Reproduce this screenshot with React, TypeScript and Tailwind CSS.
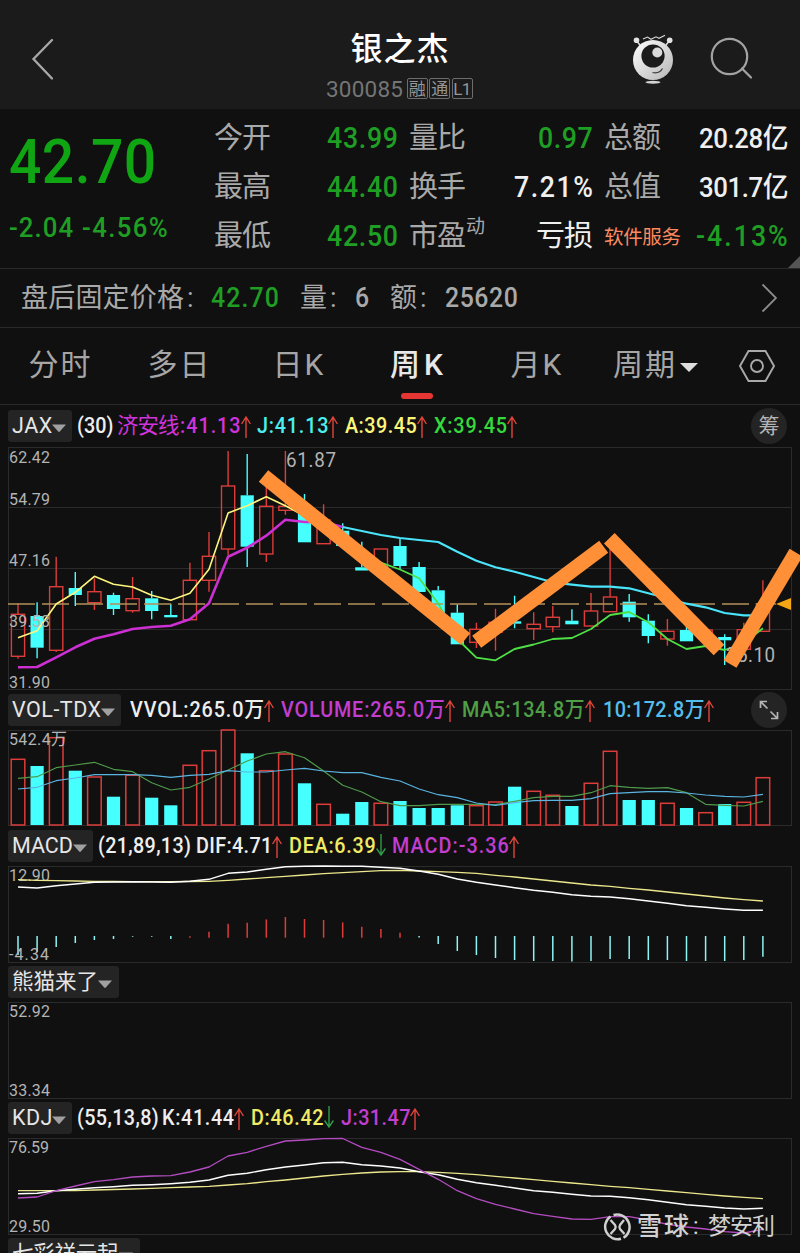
import React, { useLayoutEffect, useRef } from "react";

/* Text that spreads its letters over the width its class gives it.
   Figures are drawn a little condensed, Chinese text is not. */
function Fit({ children, className = "", wide = false }: { children: string; className?: string; wide?: boolean }) {
  const outer = useRef<HTMLSpanElement>(null);
  const inner = useRef<HTMLSpanElement>(null);
  const plain = wide || !/\d/.test(children);
  const scale = plain ? 1 : 0.92;
  useLayoutEffect(() => {
    const o = outer.current;
    const i = inner.current;
    if (!o || !i) return;
    i.style.letterSpacing = "0px";
    const gap = (o.clientWidth / scale - i.offsetWidth) / Math.max(1, children.length - 1);
    i.style.letterSpacing = `${gap}px`;
  }, [children, scale]);
  return (
    <span ref={outer} className={`block shrink-0 whitespace-nowrap ${className}`}>
      <span ref={inner} className={plain ? "inline-block" : "inline-block origin-left scale-x-[0.92]"}>
        {children}
      </span>
    </span>
  );
}

const FIRST_X = 18;
const STEP = 19.1;
const xAt = (i: number) => FIRST_X + STEP * i;
const toPoints = (ys: number[], start = 0) => ys.map((y, i) => `${xAt(i + start).toFixed(1)},${y}`).join(" ");

type Candle = [up: 0 | 1, high: number, top: number, bottom: number, low: number];

const candles: Candle[] = [
  [1, 603.3, 614.3, 656.3, 658.7], [0, 602.3, 616, 647.7, 658.3], [1, 556.7, 586.7, 650.3, 652],
  [0, 572, 588, 595, 606], [1, 578.3, 591.7, 602.7, 610], [0, 592.7, 595, 609, 615],
  [1, 577, 598.7, 610.7, 612.7], [0, 591, 598.3, 611, 619.3], [0, 603.7, 615, 617.3, 617.3],
  [1, 562.7, 580.3, 619.7, 619.7], [1, 532, 556.3, 580.3, 591.7], [1, 451, 486, 549, 555],
  [0, 454, 495.3, 546.7, 567], [1, 480, 506.3, 554, 562], [1, 451, 506.3, 510.3, 514.7],
  [0, 494, 511, 542.3, 542.3], [1, 504.3, 520, 543.7, 543.7], [0, 523.3, 530.7, 546, 546],
  [0, 541.7, 567.3, 570.5, 570.5], [1, 549, 549, 568, 568], [0, 539, 546, 566, 569.3],
  [0, 562, 567, 592, 592], [0, 586, 590.3, 613, 613], [0, 604.3, 612.7, 644.3, 644.3],
  [1, 622.7, 629.3, 642.3, 648], [1, 608.7, 622.3, 632.3, 650.7], [0, 595.7, 621.3, 623.7, 628.3],
  [1, 612.3, 624.3, 628.7, 640], [1, 606, 617.3, 626.7, 632.3], [0, 609.3, 620.7, 624.3, 624.3],
  [1, 593, 611, 626, 626], [1, 546, 597, 611.7, 611.7], [0, 594, 601.7, 617.3, 621.7],
  [0, 614.3, 620.7, 636, 643.3], [1, 619, 631.3, 639, 645.7], [0, 623.7, 630, 641.3, 641.3],
  [1, 630, 630, 639, 639], [0, 634.3, 637, 640.3, 665], [1, 622.7, 629.7, 649.3, 649.3],
  [1, 580.3, 603.7, 631.3, 631.3],
];

const priceYellow = [637.7, 630.7, 604, 592.3, 576.3, 584.3, 587, 595.3, 600.3, 593.3, 569.3, 513, 505.7, 496.7, 505.7, 516, 530];
const priceGreen = [530, 545, 553, 562.7, 569.5, 578.3, 603.3, 639, 657.7, 660.3, 649, 644.5, 639, 638, 629, 615, 612, 622.3, 639, 649, 646, 650, 643.3, 628.3];
const pricePurple = [667.3, 667, 657.3, 647.3, 638.7, 634.3, 629, 627, 625.7, 619.3, 603.3, 556.7, 547.7, 535.7, 519.7, 522, 522, 527];
const priceCyan = [527, 531, 535, 538, 540, 542, 551.7, 560.7, 567.3, 571.7, 577, 582.3, 584.7, 586.7, 586.7, 588.3, 593.3, 598.3, 603.7, 607.3, 613, 615.3, 615.3];

const volumeTops = [759.3, 766, 737.7, 770.7, 777, 796.7, 775.3, 797.7, 805.3, 765.3, 750.7, 730, 753.3, 770.7, 754, 783.3, 804.3, 813.7, 802, 803.3, 801, 808, 808, 805.3, 805.7, 802, 786.7, 791.3, 795.3, 806, 783.3, 751.3, 800, 800, 803.3, 808, 812.7, 804, 802.3, 777.7];
const volumeGreen = [778.3, 776.7, 767.7, 765, 762.3, 769.3, 771.7, 782.7, 790, 787.3, 779, 770, 761, 754, 751.7, 757.7, 771, 785.3, 792, 801.7, 805.7, 805.7, 804.3, 804.3, 804.3, 804.7, 801.3, 797.7, 796.3, 796.3, 792.7, 785.7, 787.3, 788.3, 787.7, 792.7, 804.3, 805.3, 806, 801.3];
const volumeBlue = [789, 787.3, 780.7, 778, 774.7, 774.7, 774.7, 775.3, 777.3, 775.3, 774.3, 770.7, 772, 772, 770, 768.3, 771, 772.7, 772.7, 777.3, 781, 789, 794.7, 797.7, 803, 805.3, 802.7, 800.7, 800.3, 800.3, 798.7, 793.7, 792.7, 791.7, 791.7, 793, 795, 796.3, 797, 794.3];

const macdWhite = [887, 888, 885.7, 884, 882.3, 882, 881.7, 882, 882.3, 881.3, 879.3, 873.3, 872, 869.3, 866.7, 866.3, 866, 866.3, 866.3, 867.3, 868.3, 871, 874.3, 879, 882.3, 885, 887.7, 890.3, 892.3, 894.7, 896.3, 897, 898.7, 901, 903.3, 905.7, 907.3, 909, 910.3, 910.3];
const macdYellow = [879.7, 880.3, 880.7, 881, 881.3, 881.5, 881.7, 881.7, 881.7, 881.5, 881.3, 880.3, 879, 877.7, 876.3, 875, 873.7, 872.7, 871.7, 870.7, 870.3, 871, 871.7, 872.3, 873.3, 875.3, 877, 879, 881, 883, 885, 886.3, 888.3, 890, 892, 894, 896, 898, 899.7, 901];
const macdBars = [-19, -16, -11, -7, -4, -3, -0.7, -0.7, -3, 1.5, 6, 14, 15, 18.3, 20.7, 18.7, 17.7, 15.3, 11, 8.7, 5, -1.5, -8, -15, -19, -22, -24, -25, -25, -25.5, -25, -23, -23, -24, -24, -25, -25, -25, -24, -20.7];

const kdjPurple = [1198, 1197, 1190.7, 1186, 1181.7, 1179.7, 1177, 1176, 1175.7, 1172, 1167, 1156, 1152.3, 1146.3, 1141, 1140, 1138.7, 1138.5, 1147.3, 1152.3, 1159.3, 1169.3, 1179.3, 1190.7, 1198.7, 1204.3, 1209, 1213.7, 1216.3, 1219, 1219.3, 1216.7, 1216.7, 1220, 1224.3, 1227, 1229, 1231.7, 1233, 1229.3];
const kdjWhite = [1193.7, 1193.3, 1190.7, 1189.3, 1187.7, 1186.7, 1185.3, 1184.7, 1183.7, 1182.3, 1180, 1175.3, 1173.3, 1169.7, 1167, 1165, 1162.7, 1162.3, 1164.7, 1166, 1168, 1171.7, 1174.7, 1179.3, 1182.7, 1185.3, 1188, 1190.7, 1192.3, 1194.3, 1196, 1196.3, 1197.7, 1199.7, 1202.3, 1204.7, 1206.3, 1208, 1209, 1208.3];
const kdjYellow = [1190.7, 1190.7, 1190.7, 1190.7, 1190, 1189.5, 1189, 1188.3, 1187.7, 1187, 1186.3, 1185, 1183.7, 1181.7, 1180, 1178, 1176, 1174.3, 1173, 1172, 1171.7, 1171.7, 1172.3, 1173.3, 1174.7, 1176.3, 1178, 1179.7, 1181.3, 1183, 1184.7, 1186.3, 1187.7, 1189.3, 1191, 1192.7, 1194.3, 1196, 1197.3, 1198.7];

const RED = "#dc3c3a";
const CYAN = "#46ffff";

function Line({ points, color, width = 1.3 }: { points: string; color: string; width?: number }) {
  return <polyline points={points} fill="none" stroke={color} strokeWidth={width} strokeLinejoin="round" />;
}

function AxisLabel({ x = 9, y, w, children, size = 17 }: { x?: number; y: number; w: number; children: string; size?: number }) {
  return (
    <text transform={`translate(${x} ${y - 0.5}) scale(0.94 1)`} textLength={w / 0.94} fontSize={size} fill="#b4b4b4">
      {children}
    </text>
  );
}

function Frame({ top, bottom }: { top: number; bottom: number }) {
  return <rect x="8.5" y={top + 0.5} width="783" height={bottom - top - 1} fill="none" stroke="#2b2b2b" />;
}

function PriceChart() {
  return (
    <svg className="block h-[243px] w-[800px] overflow-visible" viewBox="0 447 800 243">
      <Frame top={447} bottom={690} />
      {[507.5, 568.5, 629.5].map((y) => (
        <path key={y} d={`M9 ${y}H791`} stroke="#2b2b2b" />
      ))}
      {candles.map(([up, high, top, bottom, low], i) => {
        const x = xAt(i);
        const color = up ? RED : CYAN;
        return (
          <g key={i} stroke={color} strokeWidth="1.4">
            <path d={`M${x} ${high}V${top}M${x} ${bottom}V${low}`} />
            {up ? (
              <rect x={x - 6.6} y={top} width="13.2" height={bottom - top} fill="none" />
            ) : (
              <rect x={x - 6.6} y={top} width="13.2" height={bottom - top} fill={color} stroke="none" />
            )}
          </g>
        );
      })}
      <path d="M8 604H776" stroke="#b3905a" strokeWidth="1.4" strokeDasharray="27 7" />
      <Line points={toPoints(priceYellow)} color="#fdf67e" width={1.6} />
      <Line points={toPoints(priceGreen, 16)} color="#4fe045" width={1.8} />
      <Line points={toPoints(pricePurple)} color="#cc2fd2" width={2.6} />
      <Line points={toPoints(priceCyan, 17)} color="#4ae4fb" width={2.2} />
      <AxisLabel y={463} w={41}>62.42</AxisLabel>
      <AxisLabel y={505.5} w={41}>54.79</AxisLabel>
      <AxisLabel y={566.5} w={41}>47.16</AxisLabel>
      <AxisLabel y={627.5} w={41}>39.53</AxisLabel>
      <AxisLabel y={688} w={41}>31.90</AxisLabel>
      <AxisLabel x={286} y={467} w={50} size={20}>61.87</AxisLabel>
      <AxisLabel x={726} y={662.5} w={49} size={20}>35.10</AxisLabel>
      <path d="M791 598V610L776 604Z" fill="#f5a614" />
      <g stroke="#ff9038" strokeWidth="15" fill="none">
        <path d="M263.5 476L465.5 639" />
        <path d="M476.7 641.7L603.7 546.7" />
        <path d="M609.3 538.3L719 650" />
        <path d="M730 664L796 552.7" />
      </g>
    </svg>
  );
}

function VolumeChart() {
  return (
    <svg className="block h-[96px] w-[800px] overflow-visible" viewBox="0 730 800 96">
      <Frame top={730} bottom={826} />
      {volumeTops.map((top, i) =>
        candles[i][0] ? (
          <rect key={i} x={xAt(i) - 6.8} y={top} width="13.6" height={825 - top} fill="none" stroke={RED} strokeWidth="1.5" />
        ) : (
          <rect key={i} x={xAt(i) - 6.6} y={top} width="13.2" height={825 - top} fill={CYAN} />
        ),
      )}
      <Line points={toPoints(volumeGreen)} color="#4f9a4a" width={1.2} />
      <Line points={toPoints(volumeBlue)} color="#5bb4e0" width={1.2} />
      <AxisLabel y={745} w={58}>542.4万</AxisLabel>
    </svg>
  );
}

function MacdChart() {
  return (
    <svg className="block h-[96px] w-[800px] overflow-visible" viewBox="0 866 800 96">
      <Frame top={866} bottom={963} />
      {macdBars.map((v, i) => (
        <path key={i} d={v > 0 ? `M${xAt(i)} ${937.7 - v}V937.7` : `M${xAt(i)} 936V${936 - v}`} stroke={v > 0 ? RED : "#8df5f3"} strokeWidth="1.5" />
      ))}
      <AxisLabel y={881} w={41}>12.90</AxisLabel>
      <AxisLabel y={960} w={40}>-4.34</AxisLabel>
      <Line points={toPoints(macdYellow)} color="#ece78d" />
      <Line points={toPoints(macdWhite)} color="#ffffff" width={1.4} />
    </svg>
  );
}

function EmptyChart() {
  return (
    <svg className="block h-[96px] w-[800px] overflow-visible" viewBox="0 1002 800 96">
      <Frame top={1002} bottom={1099} />
      <AxisLabel y={1017.5} w={41}>52.92</AxisLabel>
      <AxisLabel y={1096.5} w={41}>33.34</AxisLabel>
    </svg>
  );
}

function KdjChart() {
  return (
    <svg className="block h-[96px] w-[800px] overflow-visible" viewBox="0 1138 800 96">
      <Frame top={1138} bottom={1235} />
      <AxisLabel y={1153.5} w={40}>76.59</AxisLabel>
      <AxisLabel y={1232.5} w={41}>29.50</AxisLabel>
      <Line points={toPoints(kdjYellow)} color="#ece78d" />
      <Line points={toPoints(kdjWhite)} color="#ffffff" width={1.4} />
      <Line points={toPoints(kdjPurple)} color="#b34cc0" />
    </svg>
  );
}

function Trend({ down = false }: { down?: boolean }) {
  return (
    <svg className={`h-6 w-[10px] shrink-0 ${down ? "-translate-y-px" : "translate-y-px"}`} viewBox="0 0 10 24" fill="none" strokeWidth="1.4">
      {down ? <path d="M5 1V22M0.6 15.5L5 22L9.4 15.5" stroke="#2f9a48" /> : <path d="M5 23V2M0.6 9L5 2L9.4 9" stroke="#e2453a" />}
    </svg>
  );
}

function Badge({ width, textWidth, children }: { width: string; textWidth: string; children: string }) {
  return (
    <div className={`flex h-8 shrink-0 items-center rounded-[3px] bg-[#242424] pl-1 text-[#e6e6e6] ${width}`}>
      <Fit className={textWidth}>{children}</Fit>
      <svg className="mt-[3px] h-2 w-[14px] shrink-0" viewBox="0 0 14 8">
        <path d="M0 0.5H14L7.8 7.6Q7 8.3 6.2 7.6Z" fill="#a0a0a0" />
      </svg>
    </div>
  );
}

function Metric({ className, trend, children }: { className: string; trend?: "up" | "down"; children: string }) {
  return (
    <div className="flex shrink-0 items-center font-medium">
      <Fit className={className}>{children}</Fit>
      {trend && <Trend down={trend === "down"} />}
    </div>
  );
}

function IndicatorRow({ children, className = "h-10" }: { children: React.ReactNode; className?: string }) {
  return <div className={`flex items-center pl-2 text-[21.5px] leading-8 ${className}`}>{children}</div>;
}

function Quote({ label, labelClass = "w-[57px]", value, valueClass, sup }: { label: string; labelClass?: string; value: string; valueClass: string; sup?: string }) {
  return (
    <div className="flex h-[49px] items-center justify-between text-[29px]">
      <div className="flex items-center text-[#a9a9a9]">
        <Fit className={labelClass}>{label}</Fit>
        {sup && <span className="mb-[19px] text-[19px] leading-5">{sup}</span>}
      </div>
      <Fit className={valueClass}>{value}</Fit>
    </div>
  );
}

function Header() {
  return (
    <header className="flex h-[109px] items-center bg-[#1b1b1b]">
      <svg className="mt-[9px] ml-[30px] h-11 w-[26px] shrink-0" viewBox="0 0 26 44" fill="none">
        <path d="M22 3L3.5 22L22 41.5" stroke="#a8a8a8" strokeWidth="2.3" strokeLinecap="round" />
      </svg>
      <div className="ml-[270px] flex w-[147px] shrink-0 flex-col items-center pt-[22px]">
        <Fit className="w-[98px] text-[32px] leading-[44px] font-medium text-white">银之杰</Fit>
        <div className="mt-[3px] flex w-full items-center gap-[1.5px] pb-[1px]">
          <Fit wide className="mr-[2px] w-[77px] text-[22.5px] leading-[30px] text-[#757575]">300085</Fit>
          {["融", "通", "L1"].map((tag) => (
            <span key={tag} className="flex h-[21px] w-[21px] shrink-0 items-center justify-center rounded-[2px] border border-[#6d6d6d] text-[17px] leading-5 tracking-[-0.5px] text-[#969696]">
              {tag}
            </span>
          ))}
        </div>
      </div>
      <svg className="mt-[9px] ml-[159px] h-[50px] w-[42px] shrink-0" viewBox="632 33 42 50">
        <defs>
          <linearGradient id="robot" x1="0" y1="0" x2="1" y2="1">
            <stop offset="0" stopColor="#ffffff" />
            <stop offset="1" stopColor="#b5b5b5" />
          </linearGradient>
        </defs>
        <path d="M636.5 39.5L641 45.5M669.5 39.5L665 45.5" stroke="#dedede" strokeWidth="1.5" />
        <circle cx="636.5" cy="39.3" r="2.8" fill="#e4e4e4" />
        <circle cx="669.7" cy="39.3" r="2.8" fill="#e4e4e4" />
        <path d="M643 38L647.5 36L651 38.3L656 35.8L659 37.3L665 34.3" fill="none" stroke="#d8d8d8" strokeWidth="1.1" />
        <circle cx="653" cy="59" r="20" fill="url(#robot)" />
        <circle cx="653" cy="55" r="11.6" fill="#1b1b1b" />
        <circle cx="657.3" cy="51.5" r="5" fill="#dadada" />
        <path d="M652.5 71.5Q659.5 73 662.5 67.5" fill="none" stroke="#3a3a3a" strokeWidth="1.2" />
        <ellipse cx="653" cy="81.3" rx="7.5" ry="1.5" fill="#d4d4d4" />
      </svg>
      <svg className="mt-[9px] ml-[36px] h-11 w-11 shrink-0" viewBox="710 37 44 44" fill="none" stroke="#a3a3a3" strokeWidth="2.2">
        <circle cx="729.5" cy="56.5" r="17.7" />
        <path d="M742 68.5L751 77.5" strokeLinecap="round" />
      </svg>
    </header>
  );
}

const GREEN = "font-medium text-[#1f9e24]";
const WHITE = "font-medium text-[#efefef]";

export default function App() {
  return (
    <div className="relative h-[1253px] w-[800px] overflow-hidden bg-[#101010] font-[Roboto,'Noto_Sans_CJK_SC',sans-serif] text-white">
      <Header />

      <section className="relative flex h-[160px] border-b border-[#292929]">
        <div className="w-[214px] shrink-0 pt-[19px] pl-[9px] text-[#0fa513]">
          <Fit className="w-[147px] text-[62px] leading-[68px] font-medium">42.70</Fit>
          <div className="mt-[16px] flex gap-[9px] text-[28px] leading-8">
            <Fit className={`w-[64px] ${GREEN}`}>-2.04</Fit>
            <Fit className={`w-[86px] ${GREEN}`}>-4.56%</Fit>
          </div>
        </div>
        <div className="grid w-[574px] grid-cols-3 content-start gap-x-[11px] pt-[5px]">
          <Quote label="今开" value="43.99" valueClass={`w-[71px] ${GREEN}`} />
          <Quote label="量比" value="0.97" valueClass={`w-[55px] ${GREEN}`} />
          <Quote label="总额" value="20.28亿" valueClass={`w-[89px] text-[28px] ${WHITE}`} />
          <Quote label="最高" value="44.40" valueClass={`w-[71px] ${GREEN}`} />
          <Quote label="换手" value="7.21%" valueClass={`w-[79px] ${WHITE}`} />
          <Quote label="总值" value="301.7亿" valueClass={`w-[89px] text-[28px] ${WHITE}`} />
          <Quote label="最低" value="42.50" valueClass={`w-[71px] ${GREEN}`} />
          <Quote label="市盈" sup="动" value="亏损" valueClass="w-[57px] text-[#efefef]" />
          <Quote label="软件服务" labelClass="w-[77px] text-[19.5px] pt-[3px] text-[#fc8a60]" value="-4.13%" valueClass={`w-[92px] ${GREEN}`} />
        </div>
        <svg className="absolute right-0 bottom-0 h-3 w-3" viewBox="0 0 12 12">
          <path d="M12 0V12H0Z" fill="#555" />
        </svg>
      </section>

      <section className="flex h-[59px] items-center border-b border-[#292929] pl-[21px] text-[27px] text-[#a9a9a9]">
        <Fit className="w-[163px]">盘后固定价格</Fit>
        <span className="ml-[3px] w-[10px]">:</span>
        <Fit className={`ml-[14px] w-[68px] ${GREEN}`}>42.70</Fit>
        <span className="ml-[21px] w-[27px]">量</span>
        <span className="ml-[3px] w-[10px]">:</span>
        <Fit className="ml-[15px] w-[14px] font-medium">6</Fit>
        <span className="ml-[21px] w-[27px]">额</span>
        <span className="ml-[3px] w-[10px]">:</span>
        <Fit className="ml-[15px] w-[73px] font-medium">25620</Fit>
        <svg className="ml-[243px] h-8 w-4" viewBox="0 0 16 32" fill="none">
          <path d="M1.5 2.5L15 16L1.5 29.5" stroke="#8d8d8d" strokeWidth="1.8" />
        </svg>
      </section>

      <nav className="flex h-[77px] items-start border-b border-[#292929] pt-[15px] text-[30px] leading-[44px] text-[#a6a6a6]">
        <div className="flex w-[119px] justify-center"><Fit className="w-[62px]">分时</Fit></div>
        <div className="flex w-[119px] justify-center"><Fit className="w-[62px]">多日</Fit></div>
        <div className="flex w-[120px] justify-center"><Fit className="w-[51px]">日K</Fit></div>
        <div className="flex w-[117px] flex-col items-center font-medium text-[#e8e8e8]">
          <Fit className="w-[53px]">周K</Fit>
          <span className="mt-[6px] h-[6px] w-8 rounded-full bg-[#e63634]" />
        </div>
        <div className="flex w-[122px] justify-center"><Fit className="w-[51px]">月K</Fit></div>
        <div className="flex w-[117px] items-center justify-center gap-[5px]">
          <Fit className="w-[62px]">周期</Fit>
          <svg className="mt-[5px] h-[9px] w-[18px]" viewBox="0 0 18 9"><path d="M0 0H18L9 9Z" fill="#dedede" /></svg>
        </div>
        <svg className="mt-[6px] ml-[25px] h-[34px] w-9" viewBox="0 0 36 34" fill="none" stroke="#a9a9a9" strokeWidth="1.9">
          <path d="M9.5 2H26.5L35 17L26.5 32H9.5L1 17Z" />
          <circle cx="18" cy="17" r="6" />
        </svg>
      </nav>

      <IndicatorRow className="h-[42px]">
        <Badge width="w-16" textWidth="w-10">JAX</Badge>
        <Metric className="ml-[5px] w-[36px] text-[#eeeeee]">(30)</Metric>
        <Fit className="ml-[4px] w-[63px] text-[#cf34dc]">济安线</Fit>
        <Metric className="w-[61px] text-[#cf34dc]" trend="up">:41.13</Metric>
        <Metric className="ml-[6px] w-[71px] text-[#4beeee]" trend="up">J:41.13</Metric>
        <Metric className="ml-[7px] w-[72px] text-[#fbf57a]" trend="up">A:39.45</Metric>
        <Metric className="ml-[7px] w-[73px] text-[#34d93d]" trend="up">X:39.45</Metric>
        <span className="mr-[13px] ml-auto flex h-9 w-9 items-center justify-center rounded-full bg-[#242424] text-[21px] text-[#b5b5b5]">筹</span>
      </IndicatorRow>
      <PriceChart />

      <IndicatorRow>
        <Badge width="w-[113px]" textWidth="w-[89px]">VOL-TDX</Badge>
        <Metric className="ml-[9px] w-[134px] text-[#eeeeee]" trend="up">VVOL:265.0万</Metric>
        <Metric className="ml-[7px] w-[164px] text-[#c13ed0]" trend="up">VOLUME:265.0万</Metric>
        <Metric className="ml-[7px] w-[123px] text-[#4e9f45]" trend="up">MA5:134.8万</Metric>
        <Metric className="ml-[8px] w-[101px] text-[#55bdec]" trend="up">10:172.8万</Metric>
        <span className="mr-[13px] ml-auto flex h-9 w-9 items-center justify-center rounded-full bg-[#242424]">
          <svg className="h-5 w-5" viewBox="0 0 20 20" fill="none" stroke="#b5b5b5" strokeWidth="1.7">
            <path d="M8 1.5H1.5V8M1.5 1.5L8.5 8.5M12 18.5H18.5V12M18.5 18.5L11.5 11.5" />
          </svg>
        </span>
      </IndicatorRow>
      <VolumeChart />

      <IndicatorRow>
        <Badge width="w-[85px]" textWidth="w-[61px]">MACD</Badge>
        <Metric className="ml-[5px] w-[93px] text-[#eeeeee]">(21,89,13)</Metric>
        <Metric className="ml-[5px] w-[76px] text-[#eeeeee]" trend="up">DIF:4.71</Metric>
        <Metric className="ml-[7px] w-[87px] text-[#f0ea65]" trend="down">DEA:6.39</Metric>
        <Metric className="ml-[6px] w-[117px] text-[#c13ed0]" trend="up">MACD:-3.36</Metric>
      </IndicatorRow>
      <MacdChart />

      <IndicatorRow>
        <Badge width="w-[111px]" textWidth="w-[86px]">熊猫来了</Badge>
      </IndicatorRow>
      <EmptyChart />

      <IndicatorRow>
        <Badge width="w-16" textWidth="w-10">KDJ</Badge>
        <Metric className="ml-[5px] w-[82px] text-[#eeeeee]">(55,13,8)</Metric>
        <Metric className="ml-[3px] w-[72px] text-[#eeeeee]" trend="up">K:41.44</Metric>
        <Metric className="ml-[7px] w-[73px] text-[#f0ea65]" trend="down">D:46.42</Metric>
        <Metric className="ml-[7px] w-[69px] text-[#c13ed0]" trend="up">J:31.47</Metric>
      </IndicatorRow>
      <KdjChart />

      <IndicatorRow>
        <Badge width="w-[132px]" textWidth="w-[107px]">七彩祥云起</Badge>
      </IndicatorRow>

      <div className="absolute top-[1209px] left-[603px] flex h-9 items-center text-[23px] text-[#d2d2d2]">
        <svg className="h-7 w-7" viewBox="0 0 28 28" fill="none" stroke="#cfcfcf" strokeWidth="2.5">
          <path d="M7.5 3.5A12.5 12.5 0 0 0 18 25.8" />
          <path d="M10.500 2A12.500 12.500 0 0 1 20.500 24.700" />
          <path d="M7.500 7L12 12Q13.300 14 12 16L7.500 21M21 7L17 12Q15.800 14 17 16L21.500 21" strokeWidth="2.300" />
        </svg>
        <Fit className="ml-[6px] w-[52px] text-[25px] font-medium">雪球</Fit>
        <span className="ml-[4px] w-[6px]">:</span>
        <Fit className="ml-[9px] w-[67px]">梦安利</Fit>
      </div>
    </div>
  );
}
